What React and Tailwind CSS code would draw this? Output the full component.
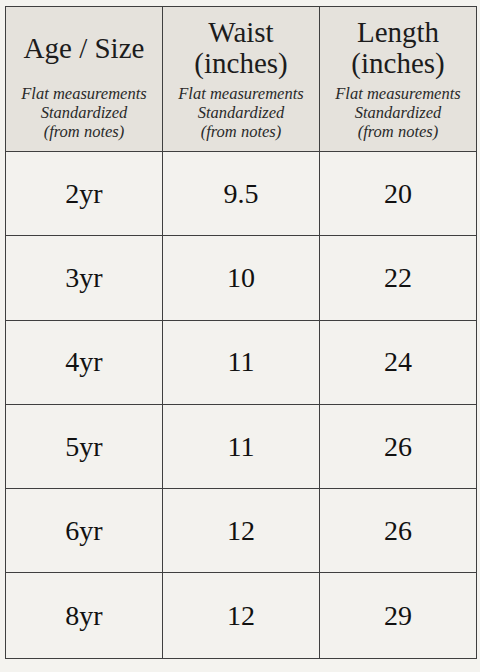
const rows = [
  ['2yr', '9.5', '20'],
  ['3yr', '10', '22'],
  ['4yr', '11', '24'],
  ['5yr', '11', '26'],
  ['6yr', '12', '26'],
  ['8yr', '12', '29'],
]

const heads = [['Age / Size'], ['Waist', '(inches)'], ['Length', '(inches)']]

function HeadCell({ lines, last }) {
  return (
    <div className={`flex flex-col items-center bg-[#e5e2dc] pt-[8px] ${last ? '' : 'border-r border-[#3f3f3f]'}`}>
      <div className="h-[66px] flex flex-col items-center justify-center text-[29px] leading-[31px] text-[#1c1c1c]">
        {lines.map(l => (
          <span key={l}>{l}</span>
        ))}
      </div>
      <div className="mt-[3px] flex flex-col items-center italic text-[16.5px] leading-[19px] text-[#2a2a2a]">
        <span>Flat measurements</span>
        <span>Standardized</span>
        <span>(from notes)</span>
      </div>
    </div>
  )
}

export default function App() {
  return (
    <div className="w-[480px] h-[672px] bg-[#f4f3ef] pt-[6px] pl-[5px]" style={{ fontFamily: '"Liberation Serif", serif' }}>
      <div className="w-[472px] border-[1.5px] border-[#3f3f3f] bg-[#f3f2ee]">
        <div className="grid grid-cols-[157px_157px_1fr] h-[145px] border-b-[1.5px] border-[#3f3f3f]">
          {heads.map((h, i) => (
            <HeadCell key={i} lines={h} last={i === 2} />
          ))}
        </div>
        {rows.map((r, ri) => (
          <div
            key={r[0]}
            className={`grid grid-cols-[157px_157px_1fr] h-[84.3px] ${ri < rows.length - 1 ? 'border-b-[1.5px] border-[#3f3f3f]' : ''}`}
          >
            {r.map((c, ci) => (
              <div
                key={ci}
                className={`flex items-center justify-center text-[28px] text-[#111] ${ci < 2 ? 'border-r border-[#3f3f3f]' : ''}`}
              >
                {c}
              </div>
            ))}
          </div>
        ))}
      </div>
    </div>
  )
}
